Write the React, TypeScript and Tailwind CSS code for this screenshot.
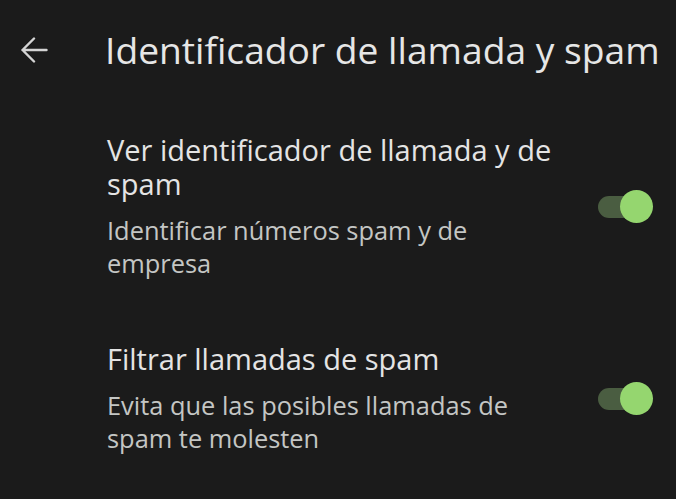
import React, { useState } from 'react';

function Toggle({ on, onChange }: { on: boolean; onChange: () => void }) {
  return (
    <button
      onClick={onChange}
      className={`relative flex h-[22px] w-[53px] shrink-0 items-center rounded-full ${on ? 'bg-[#4a5d41]' : 'bg-[#3a3a3a]'}`}
    >
      <span
        className={`absolute h-[33px] w-[33px] rounded-full ${on ? 'right-[-2px] bg-[#95d66f]' : 'left-[-2px] bg-[#9a9a9a]'}`}
      />
    </button>
  );
}

function Row({
  title,
  summary,
  on,
  onToggle,
}: {
  title: string;
  summary: string;
  on: boolean;
  onToggle: () => void;
}) {
  return (
    <div className="flex items-center pl-[107px] pr-[25px]">
      <div className="w-[450px] shrink-0">
        <p className="text-[29px] leading-[34px] text-[#e4e4e4]">{title}</p>
        <p className="mt-[13px] text-[25.4px] leading-[33px] text-[#c4c6c4]">{summary}</p>
      </div>
      <div className="flex flex-1 justify-end">
        <Toggle on={on} onChange={onToggle} />
      </div>
    </div>
  );
}

export default function App() {
  const [callerId, setCallerId] = useState(true);
  const [filter, setFilter] = useState(true);

  return (
    <div
      className="h-[499px] w-[676px] overflow-hidden bg-[#1b1b1b]"
      style={{ fontFamily: '"Open Sans", Roboto, sans-serif' }}
    >
      <header className="flex h-[100px] items-center">
        <button className="ml-[20px] flex items-center text-[#d4d4d4]">
          <svg width="28" height="26" viewBox="0 0 28 26" fill="none" stroke="currentColor" strokeWidth="2.4" strokeLinecap="round" strokeLinejoin="round">
            <path d="M26.5 13H2.5M14 1.5L2.5 13 14 24.5" />
          </svg>
        </button>
        <h1 className="ml-[57px] whitespace-nowrap text-[37.2px] leading-none text-[#e6e6e6]">
          Identificador de llamada y spam
        </h1>
      </header>
      <div className="mt-[33px] flex flex-col gap-[62px]">
        <Row
          title="Ver identificador de llamada y de spam"
          summary="Identificar números spam y de empresa"
          on={callerId}
          onToggle={() => setCallerId(!callerId)}
        />
        <Row
          title="Filtrar llamadas de spam"
          summary="Evita que las posibles llamadas de spam te molesten"
          on={filter}
          onToggle={() => setFilter(!filter)}
        />
      </div>
    </div>
  );
}
